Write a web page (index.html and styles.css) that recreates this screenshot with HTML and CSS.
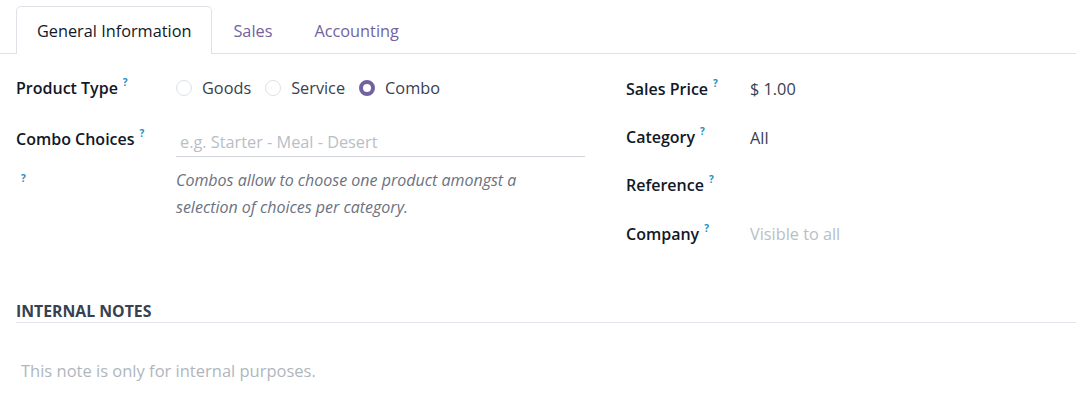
FILE: index.html
```html
<!DOCTYPE html>
<html lang="en">
<head>
  <meta charset="UTF-8">
  <meta name="viewport" content="width=device-width, initial-scale=1.0">
  <title>Product - General Information</title>
  <link rel="stylesheet" href="styles.css">
</head>
<body>
  <div class="tabs">
    <div class="tab active">General Information</div>
    <div class="tab">Sales</div>
    <div class="tab">Accounting</div>
  </div>

  <div class="content">
    <div class="groups">
      <div class="group left">
        <div class="row row-type">
          <div class="label">Product Type<sup>?</sup></div>
          <div class="value radios">
            <label class="radio"><span class="dot"></span>Goods</label>
            <label class="radio"><span class="dot"></span>Service</label>
            <label class="radio checked"><span class="dot"></span>Combo</label>
          </div>
        </div>
        <div class="row row-combo">
          <div class="label">Combo Choices<sup>?</sup></div>
          <div class="value">
            <input type="text" class="line-input" placeholder="e.g. Starter - Meal - Desert">
          </div>
        </div>
        <div class="row row-help">
          <div class="label"><sup>?</sup></div>
          <div class="value help">Combos allow to choose one product amongst a selection of choices per category.</div>
        </div>
      </div>

      <div class="group right">
        <div class="row">
          <div class="label">Sales Price<sup>?</sup></div>
          <div class="value">$ 1.00</div>
        </div>
        <div class="row">
          <div class="label">Category<sup>?</sup></div>
          <div class="value">All</div>
        </div>
        <div class="row">
          <div class="label">Reference<sup>?</sup></div>
          <div class="value"></div>
        </div>
        <div class="row">
          <div class="label">Company<sup>?</sup></div>
          <div class="value muted">Visible to all</div>
        </div>
      </div>
    </div>

    <div class="notes">
      <div class="notes-title">INTERNAL NOTES</div>
      <div class="notes-body">This note is only for internal purposes.</div>
    </div>
  </div>
</body>
</html>
```

FILE: styles.css
```css
body {
  margin: 0;
  font-family: "Open Sans", "Noto Sans", sans-serif;
  font-size: 16px;
  color: #374151;
  background: #fff;
}

/* Tabs */
.tabs {
  display: flex;
  padding: 6px 0 0 16px;
  border-bottom: 1px solid #dee2e6;
}

.tab {
  height: 46px;
  line-height: 48px;
  padding: 0 20px;
  color: #71639e;
  font-size: 16.3px;
  border: 1px solid transparent;
  border-bottom: none;
  border-radius: 5px 5px 0 0;
}

.tab.active {
  color: #111827;
  border-color: #dee2e6;
  background: #fff;
  margin-bottom: -1px;
  height: 47px;
}

/* Groups */
.content {
  padding: 10px 0 0 16px;
}

.groups {
  display: grid;
  grid-template-columns: 610px 1fr;
}

.group.left .row {
  display: grid;
  grid-template-columns: 160px 409px;
}

.group.right {
  padding-top: 1px;
}

.group.right .row {
  display: grid;
  grid-template-columns: 124px 1fr;
  height: 48.4px;
  align-items: center;
}

.label {
  font-weight: 600;
  color: #111827;
  white-space: nowrap;
  line-height: 22px;
  margin-top: -1px;
}

.value {
  font-size: 16.3px;
}

sup {
  color: #1d8fc0;
  font-size: 10px;
  font-weight: 700;
  line-height: 0;
  margin-left: 5px;
  vertical-align: 8px;
}

.row-type {
  height: 48px;
  align-items: center;
}

.radios {
  display: flex;
  gap: 14px;
}

.radio {
  display: flex;
  align-items: center;
  gap: 10px;
  color: #374151;
}

.dot {
  width: 14px;
  height: 14px;
  border: 1px solid #dee2e6;
  border-radius: 50%;
  box-sizing: content-box;
}

.radio.checked .dot {
  background: #fff;
  border: 4px solid #71639e;
  width: 8px;
  height: 8px;
}

.row-combo {
  padding-top: 17px;
}

.line-input {
  width: 100%;
  box-sizing: border-box;
  border: none;
  border-bottom: 1px solid #d1d5db;
  font: inherit;
  font-size: 16.3px;
  padding: 2px 4px 3px 4px;
  margin-top: 0;
  outline: none;
}

.line-input::placeholder {
  color: #b8bec6;
}

.row-help {
  padding-top: 10px;
}

.row-help .label sup {
  margin-left: 5px;
  vertical-align: 1px;
}

.help {
  font-style: italic;
  font-size: 16px;
  color: #6b7280;
  line-height: 27px;
  padding-right: 20px;
}

.muted {
  color: #b8bec6;
}

/* Notes */
.notes {
  margin-top: 42px;
}

.notes-title {
  font-weight: 700;
  font-size: 15.8px;
  color: #374151;
  line-height: 20px;
  padding-bottom: 1px;
  border-bottom: 1px solid #e2e5e9;
}

.notes-body {
  padding: 36px 0 0 5px;
  font-size: 16.5px;
  color: #b0b6bd;
}
```
